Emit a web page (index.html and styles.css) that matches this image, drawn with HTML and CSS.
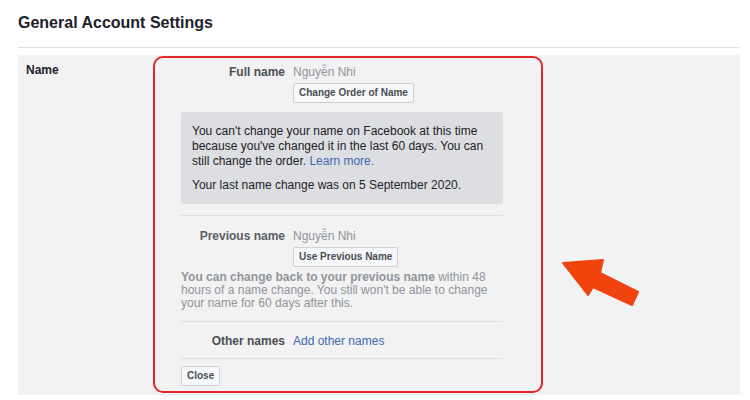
FILE: index.html
```html
<!DOCTYPE html>
<html lang="en">
<head>
<meta charset="utf-8">
<title>General Account Settings</title>
<link rel="stylesheet" href="styles.css">
</head>
<body>
<div class="page">
  <h1 class="title">General Account Settings</h1>
  <div class="panel">
    <div class="section-label">Name</div>
    <div class="editor">
      <div class="row">
        <div class="label">Full name</div>
        <div class="value">Nguyễn Nhi</div>
      </div>
      <div class="btn-row"><button class="btn">Change Order of Name</button></div>
      <div class="notice">
        <p>You can't change your name on Facebook at this time because you've changed it in the last 60 days. You can still change the order. <a class="link" href="#">Learn more.</a></p>
        <p>Your last name change was on 5 September 2020.</p>
      </div>
      <div class="sep"></div>
      <div class="row row-prev">
        <div class="label label-prev">Previous name</div>
        <div class="value">Nguyễn Nhi</div>
      </div>
      <div class="btn-row"><button class="btn">Use Previous Name</button></div>
      <p class="hint"><b>You can change back to your previous name</b> within 48 hours of a name change. You still won't be able to change your name for 60 days after this.</p>
      <div class="sep sep-2"></div>
      <div class="row row-other">
        <div class="label">Other names</div>
        <a class="link value-link" href="#">Add other names</a>
      </div>
      <div class="sep sep-3"></div>
      <button class="btn btn-close">Close</button>
    </div>
  </div>
</div>
<svg class="arrow" width="90" height="65" viewBox="0 0 90 65" aria-hidden="true">
  <polygon points="8,13 48,10 45,23 83,42 77,55 38,37 33,45" fill="#f0440f" stroke="#f0440f" stroke-width="2" stroke-linejoin="round"/>
</svg>
</body>
</html>
```
FILE: styles.css
```css
* { box-sizing: border-box; }
html, body { margin: 0; padding: 0; background: #fff; }
body {
  width: 750px;
  height: 400px;
  overflow: hidden;
  font-family: "Liberation Sans", Arial, sans-serif;
  color: #1d2129;
  position: relative;
}
.page {
  padding: 0 10px 0 18px;
}
.title {
  margin: 0;
  height: 48px;
  padding-top: 13px;
  font-size: 16px;
  line-height: 19px;
  font-weight: bold;
  color: #1d2129;
  border-bottom: 1px solid #dddfe2;
}
.panel {
  margin-top: 7px;
  background: #f2f2f2;
  height: 340px;
  display: flex;
  align-items: flex-start;
}
.section-label {
  width: 135px;
  padding: 8px 0 0 8px;
  font-size: 12px;
  font-weight: bold;
  line-height: 15px;
  color: #1d2129;
}
.editor {
  margin-top: 1px;
  width: 390px;
  height: 337px;
  border: 2px solid #e3262e;
  border-radius: 10px;
  padding: 7px 38px 0 26px;
  display: flex;
  flex-direction: column;
  align-items: flex-start;
}
.row {
  display: flex;
  gap: 8px;
  width: 100%;
  font-size: 12px;
  line-height: 15px;
}
.label {
  width: 104px;
  text-align: right;
  font-weight: bold;
  color: #4b4f56;
}
.label-prev { color: #5a5e65; }
.value { color: #90949c; }
.btn-row {
  margin-top: 3px;
  padding-left: 112px;
}
.btn {
  display: block;
  height: 20px;
  padding: 0 5px;
  margin: 0;
  background: #f6f7f9;
  border: 1px solid #ced0d4;
  border-radius: 2px;
  font-family: "Liberation Sans", Arial, sans-serif;
  font-size: 10px;
  font-weight: bold;
  color: #4b4f56;
  line-height: 18px;
}
.notice {
  margin-top: 9px;
  width: 322px;
  background: #dcdee2;
  border-radius: 3px;
  padding: 12px 11px 11px;
  font-size: 12px;
  line-height: 15px;
  color: #1d2129;
}
.notice p { margin: 0; }
.notice p + p { margin-top: 9px; }
.link { color: #4267b2; text-decoration: none; }
.sep {
  margin-top: 11px;
  width: 322px;
  height: 1px;
  background: #dddfe2;
}
.row-prev { margin-top: 13px; }
.hint {
  margin: 4px 0 0;
  width: 322px;
  font-size: 12px;
  line-height: 13px;
  color: #90949c;
}
.hint b { font-weight: bold; }
.sep-2 { margin-top: 11px; }
.row-other { margin-top: 12px; }
.value-link { font-size: 12px; }
.sep-3 { margin-top: 9px; }
.btn-close {
  margin-top: 7px;
  height: 20px;
  padding: 0 5px;
}
.arrow {
  position: absolute;
  left: 555px;
  top: 250px;
}
```
